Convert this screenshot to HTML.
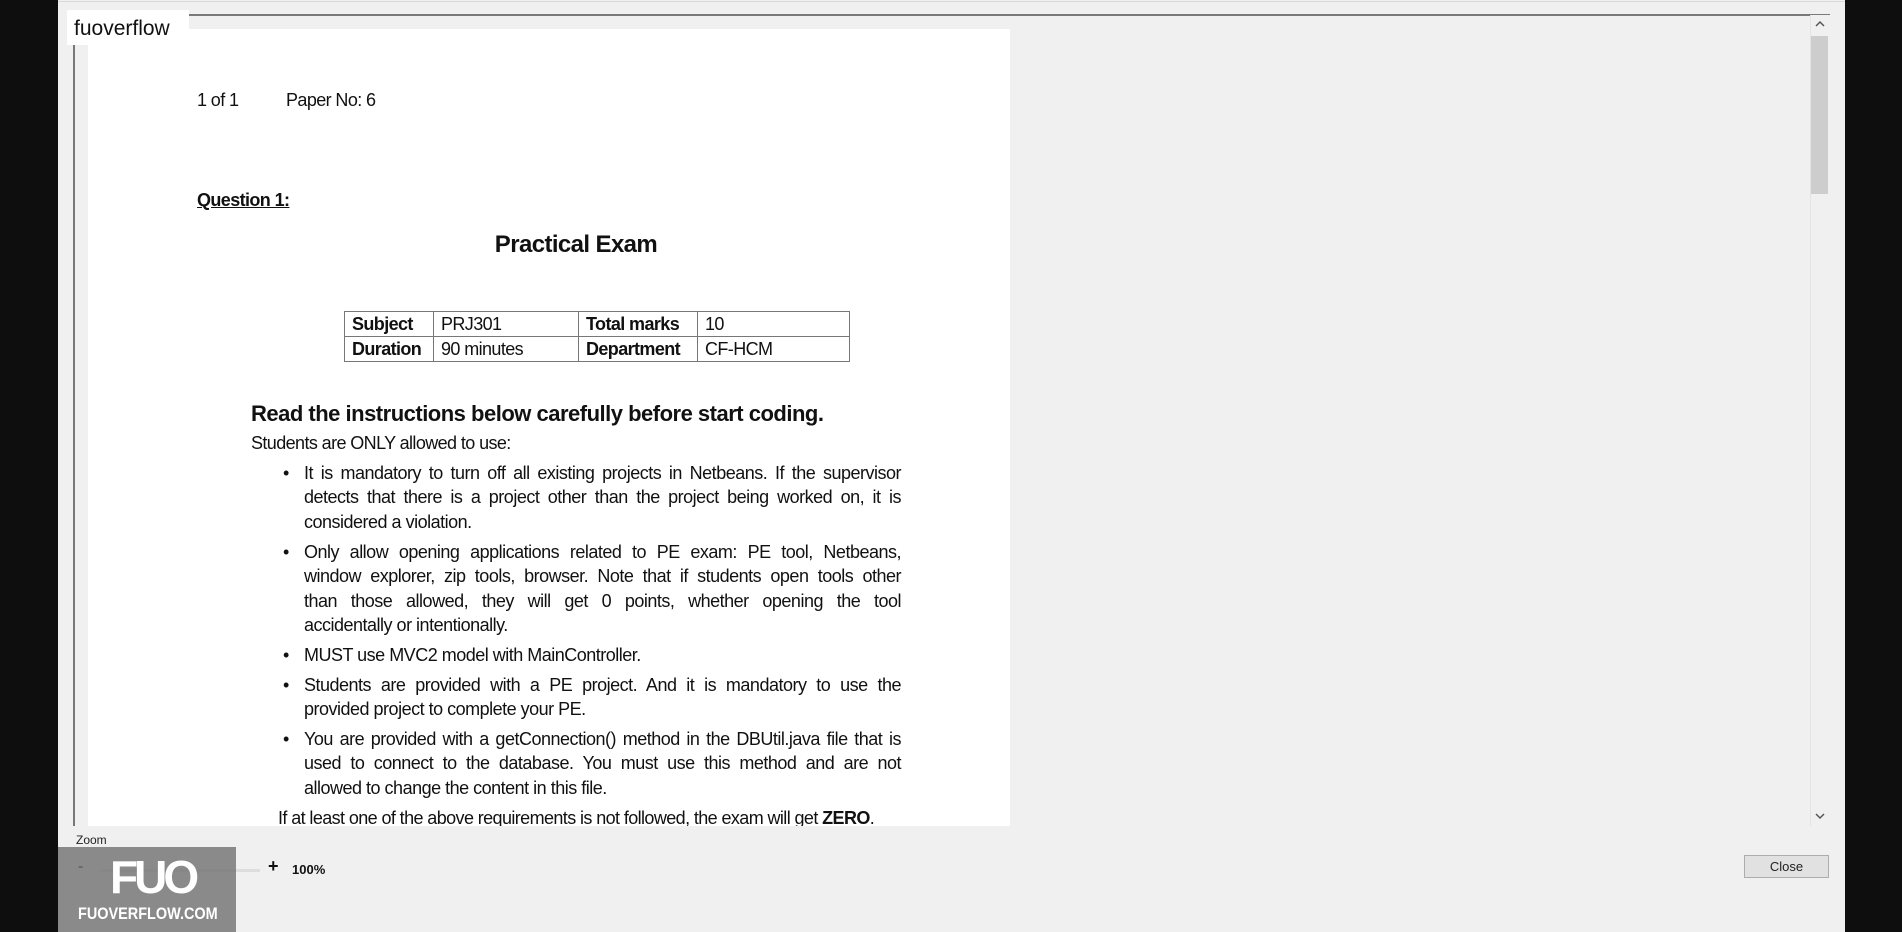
<!DOCTYPE html>
<html><head><meta charset="utf-8"><style>
*{margin:0;padding:0;box-sizing:border-box}
body{width:1902px;height:932px;background:#0e0e0e;position:relative;overflow:hidden;font-family:"Liberation Sans",Arial,sans-serif;color:#111}
.panel{position:absolute;left:58px;top:0;width:1787px;height:932px;background:#f0f0f0}
.topline{position:absolute;left:0;top:1px;width:1787px;height:1px;background:#d8d8d8}
.darkline{position:absolute;left:130px;top:14px;width:1642px;height:2px;background:#7a7a7a}
.lbl{position:absolute;left:9px;top:10px;width:122px;height:35px;background:#fff;font-size:21px;line-height:38px;padding-left:7px;color:#111}
.lborder{position:absolute;left:15px;top:44px;width:2px;height:782px;background:#777}
.page{position:absolute;left:30px;top:29px;width:922px;height:797px;background:#fff;overflow:hidden}
.t{position:absolute;white-space:nowrap;font-size:18px;letter-spacing:-0.6px}
.sb{position:absolute;left:1752px;top:15px;width:20px;height:811px;background:#f0f0f0;border-left:1px solid #e4e4e4}
.thumb{position:absolute;left:1753px;top:36px;width:17px;height:158px;background:#cdcdcd}
table{position:absolute;left:256px;top:282px;border-collapse:collapse;font-size:18px;letter-spacing:-0.6px}
td{border:1.5px solid #777;height:25px;padding:0 7px;line-height:22px}
.b{font-weight:bold}
.li{position:absolute;left:216px;width:597px;font-size:18px;letter-spacing:-0.5px;line-height:24.3px}
.li .d{position:absolute;left:-21px;top:0}
.j{text-align:justify;text-align-last:justify}
</style></head><body>
<div class="panel">
<div class="topline"></div>
<div class="darkline"></div>
<div class="lborder"></div>
<div class="page">
 <div class="t" style="left:109px;top:61px">1 of 1</div>
 <div class="t" style="left:198px;top:61px">Paper No: 6</div>
 <div class="t" style="left:109px;top:161px;font-weight:bold;text-decoration:underline">Question 1:</div>
 <div class="t" style="left:0;width:976px;text-align:center;top:202px;font-size:24px;font-weight:bold">Practical Exam</div>
 <table><tr><td class="b" style="width:89px">Subject</td><td style="width:145px">PRJ301</td><td class="b" style="width:119px">Total marks</td><td style="width:152px">10</td></tr>
 <tr><td class="b">Duration</td><td>90 minutes</td><td class="b">Department</td><td>CF-HCM</td></tr></table>
 <div class="t" style="left:163px;top:372px;font-size:22px;font-weight:bold;letter-spacing:-0.5px">Read the instructions below carefully before start coding.</div>
 <div class="t" style="left:163px;top:404px">Students are ONLY allowed to use:</div>
 <div class="li" style="top:432px"><span class="d">•</span><div class="j">It is mandatory to turn off all existing projects in Netbeans. If the supervisor</div><div class="j">detects that there is a project other than the project being worked on, it is</div><div>considered a violation.</div></div>
 <div class="li" style="top:511px"><span class="d">•</span><div class="j">Only allow opening applications related to PE exam: PE tool, Netbeans,</div><div class="j">window explorer, zip tools, browser. Note that if students open tools other</div><div class="j">than those allowed, they will get 0 points, whether opening the tool</div><div>accidentally or intentionally.</div></div>
 <div class="li" style="top:614px"><span class="d">•</span><div>MUST use MVC2 model with MainController.</div></div>
 <div class="li" style="top:644px"><span class="d">•</span><div class="j">Students are provided with a PE project. And it is mandatory to use the</div><div>provided project to complete your PE.</div></div>
 <div class="li" style="top:698px"><span class="d">•</span><div class="j">You are provided with a getConnection() method in the DBUtil.java file that is</div><div class="j">used to connect to the database. You must use this method and are not</div><div>allowed to change the content in this file.</div></div>
 <div class="t" style="left:190px;top:779px">If at least one of the above requirements is not followed, the exam will get <b>ZERO</b>.</div>
</div>
<div class="lbl">fuoverflow</div>
<div class="sb"></div>
<div class="thumb"></div>
<svg style="position:absolute;left:1756px;top:20px" width="12" height="8"><path d="M2 6 L6 2 L10 6" stroke="#555" stroke-width="1.5" fill="none"/></svg>
<svg style="position:absolute;left:1756px;top:812px" width="12" height="8"><path d="M2 2 L6 6 L10 2" stroke="#555" stroke-width="1.5" fill="none"/></svg>
<div style="position:absolute;left:18px;top:833px;font-size:12px;color:#222">Zoom</div>
<div style="position:absolute;left:42px;top:869px;width:160px;height:3px;background:#ddd"></div>
<div style="position:absolute;left:20px;top:858px;font-size:16px;font-weight:bold">-</div>
<div style="position:absolute;left:210px;top:856px;font-size:18px;font-weight:bold">+</div>
<div style="position:absolute;left:234px;top:862px;font-size:13px;font-weight:bold">100%</div>
<div style="position:absolute;left:0;top:847px;width:178px;height:85px;background:rgba(120,120,120,0.85)"></div>
<div style="position:absolute;left:52px;top:850px;font-size:46px;font-weight:bold;color:#fff;letter-spacing:-4px">FUO</div>
<div style="position:absolute;left:20px;top:904px;font-size:17px;font-weight:bold;color:#fff;transform:scaleX(0.85);transform-origin:left">FUOVERFLOW.COM</div>
<div style="position:absolute;left:1686px;top:855px;width:85px;height:23px;background:#e1e1e1;border:1px solid #adadad;font-size:13px;text-align:center;line-height:21px;color:#222">Close</div>
</div>
</body></html>
